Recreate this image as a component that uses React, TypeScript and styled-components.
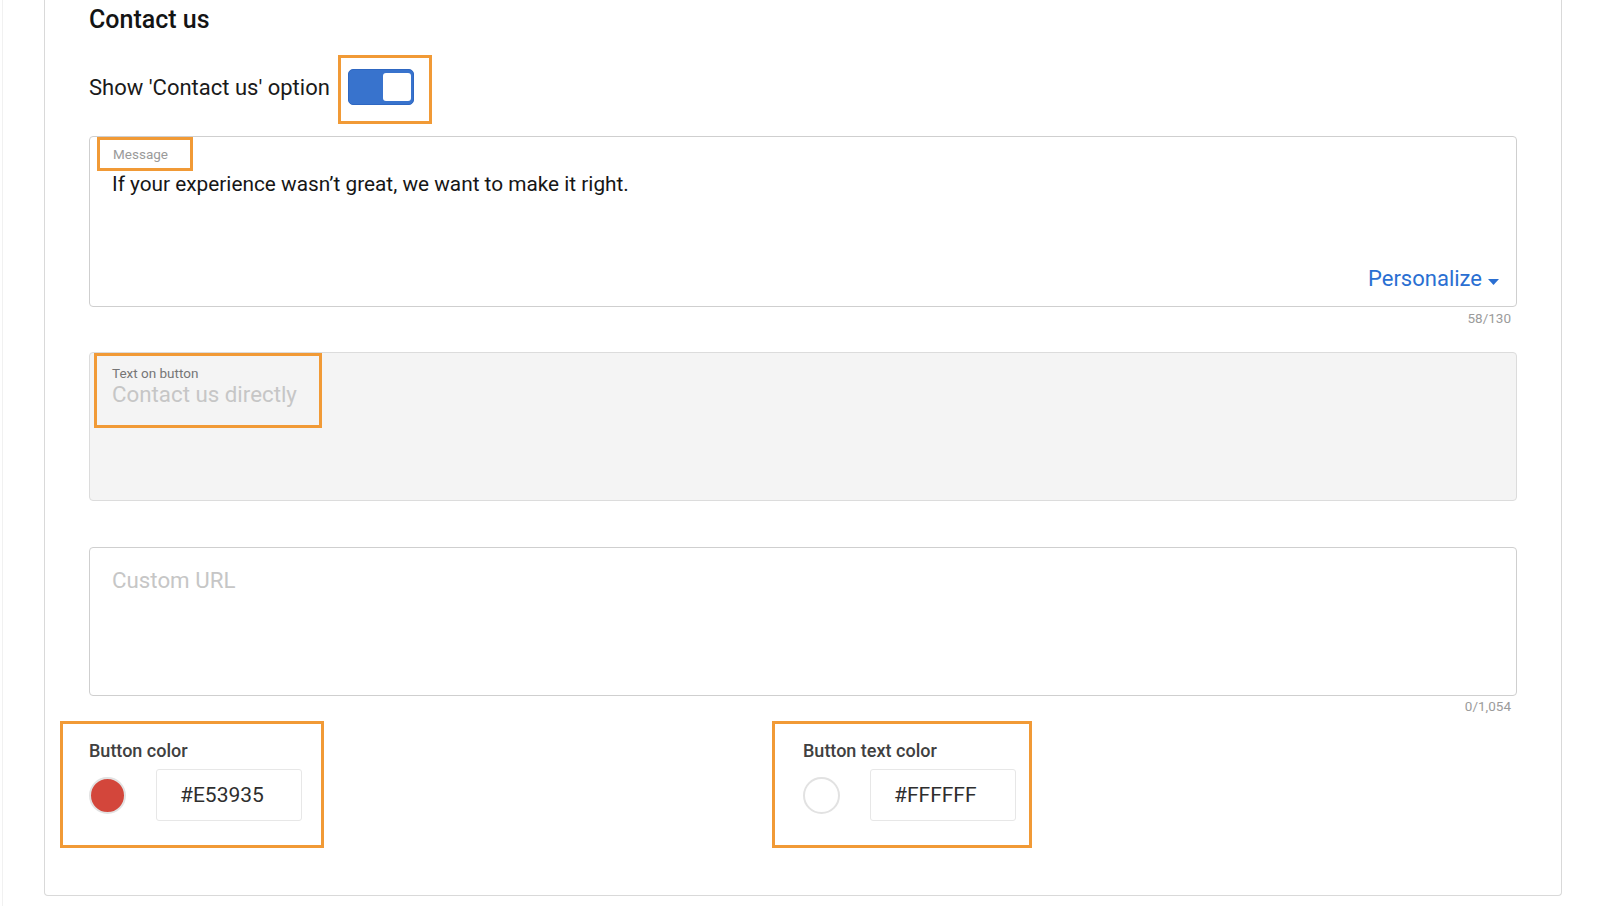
import React from "react";
import styled, { createGlobalStyle } from "styled-components";

const GlobalStyle = createGlobalStyle`
  html, body {
    margin: 0;
    padding: 0;
    background: #ffffff;
  }
  body {
    font-family: Roboto, "Noto Sans", "Liberation Sans", sans-serif;
    color: #1f1f1f;
    -webkit-font-smoothing: antialiased;
  }
  * { box-sizing: border-box; }
`;

const Page = styled.div`
  margin-left: 2px;
  border-left: 1px solid #f1f1f1;
  padding-left: 41px;
  min-height: 906px;
  display: flex;
  align-items: flex-start;
`;

const Card = styled.section`
  width: 1518px;
  border: 1px solid #d9d9d9;
  border-top: none;
  border-radius: 0 0 4px 4px;
  padding: 0 44px 47px 44px;
  display: flex;
  flex-direction: column;
`;

const Title = styled.h2`
  margin: 6px 0 0 0;
  font-size: 25px;
  line-height: 28px;
  font-weight: 500;
  color: #141414;
`;

const ToggleRow = styled.div`
  margin-top: 21px;
  display: flex;
  align-items: center;
  gap: 8px;
`;

const ToggleLabel = styled.span`
  font-size: 22px;
  line-height: 26px;
  color: #1a1a1a;
  padding-bottom: 4px;
`;

const Highlight = styled.div`
  border: 3px solid #f19a36;
`;

const ToggleHighlight = styled(Highlight)`
  padding: 11px 15px 16px 7px;
`;

const Switch = styled.div`
  width: 66px;
  height: 36px;
  border-radius: 5px;
  background: #3873cd;
  border: 1px solid #2e67c2;
  display: flex;
  justify-content: flex-end;
  align-items: center;
  padding: 0 2px;
`;

const Knob = styled.div`
  width: 28px;
  height: 28px;
  border-radius: 3px;
  background: #ffffff;
`;

const FieldBox = styled.div<{ $filled?: boolean; $height: number }>`
  height: ${(p) => p.$height}px;
  border: 1px solid ${(p) => (p.$filled ? "#dcdcdc" : "#cfcfcf")};
  background: ${(p) => (p.$filled ? "#f4f4f4" : "#ffffff")};
  border-radius: 4px;
  display: flex;
  flex-direction: column;
  align-items: flex-start;
`;

const MessageBox = styled(FieldBox)`
  margin-top: 12px;
  padding: 0 17px 14px 7px;
`;

const MessageLabelBox = styled(Highlight)`
  height: 34px;
  padding: 0 22px 0 13px;
  display: flex;
  align-items: center;
  font-size: 13.5px;
  color: #9a9a9a;
`;

const MessageText = styled.div`
  margin-left: 15px;
  font-size: 20.8px;
  line-height: 26px;
  color: #161616;
`;

const Personalize = styled.button`
  margin-top: auto;
  align-self: flex-end;
  border: none;
  background: none;
  padding: 0;
  display: flex;
  align-items: center;
  gap: 6px;
  font-family: inherit;
  font-size: 22px;
  line-height: 26px;
  color: #2a6fd2;
  cursor: pointer;
`;

const Counter = styled.div<{ $top: number }>`
  margin-top: ${(p) => p.$top}px;
  align-self: flex-end;
  padding-right: 6px;
  font-size: 13.5px;
  line-height: 16px;
  color: #9b9b9b;
`;

const ButtonTextBox = styled(FieldBox)`
  margin-top: 26px;
  padding: 0 0 0 4px;
`;

const ButtonTextHighlight = styled(Highlight)`
  padding: 9px 22px 17px 15px;
  display: flex;
  flex-direction: column;
`;

const SmallLabel = styled.span`
  font-size: 13.5px;
  line-height: 16px;
  color: #767676;
`;

const Placeholder = styled.span`
  font-size: 22.3px;
  line-height: 27px;
  color: #c6c6c6;
`;

const UrlBox = styled(FieldBox)`
  margin-top: 46px;
  padding: 19px 0 0 22px;
`;

const ColorGrid = styled.div`
  margin-top: 7px;
  display: grid;
  grid-template-columns: 1fr 1fr;
`;

const ColorHighlight = styled(Highlight)<{ $shift: number; $padLeft: number; $padRight: number }>`
  justify-self: start;
  margin-left: ${(p) => -p.$shift}px;
  padding: 16px ${(p) => p.$padRight}px 24px ${(p) => p.$padLeft}px;
  display: flex;
  flex-direction: column;
  gap: 7px;
`;

const ColorLabel = styled.span`
  font-size: 18px;
  line-height: 22px;
  font-weight: 500;
  color: #404040;
`;

const ColorRow = styled.div`
  display: flex;
  align-items: center;
  gap: 30px;
`;

const Swatch = styled.div<{ $color: string }>`
  width: 37px;
  height: 37px;
  border-radius: 50%;
  background: ${(p) => p.$color};
  border: 2px solid #e2e2e2;
`;

const HexInput = styled.div`
  width: 146px;
  height: 52px;
  border: 1px solid #e7e7e7;
  border-radius: 3px;
  display: flex;
  align-items: center;
  padding-left: 23px;
  font-size: 21px;
  color: #2e2e2e;
`;

const Caret = () => (
  <svg width="11" height="6" viewBox="0 0 11 6" style={{ marginTop: 6 }}>
    <path d="M0 0 L11 0 L5.5 6 Z" fill="#2a6fd2" />
  </svg>
);

type ColorSettingProps = {
  label: string;
  color: string;
  hex: string;
  shift: number;
  padLeft: number;
  padRight: number;
};

const ColorSetting = ({ label, color, hex, shift, padLeft, padRight }: ColorSettingProps) => (
  <ColorHighlight $shift={shift} $padLeft={padLeft} $padRight={padRight}>
    <ColorLabel>{label}</ColorLabel>
    <ColorRow>
      <Swatch $color={color} />
      <HexInput>{hex}</HexInput>
    </ColorRow>
  </ColorHighlight>
);

export default function App() {
  return (
    <>
      <GlobalStyle />
      <Page>
        <Card>
          <Title>Contact us</Title>
          <ToggleRow>
            <ToggleLabel>Show 'Contact us' option</ToggleLabel>
            <ToggleHighlight>
              <Switch>
                <Knob />
              </Switch>
            </ToggleHighlight>
          </ToggleRow>

          <MessageBox $height={171}>
            <MessageLabelBox>Message</MessageLabelBox>
            <MessageText>If your experience wasn’t great, we want to make it right.</MessageText>
            <Personalize>
              Personalize
              <Caret />
            </Personalize>
          </MessageBox>
          <Counter $top={3}>58/130</Counter>

          <ButtonTextBox $filled $height={149}>
            <ButtonTextHighlight>
              <SmallLabel>Text on button</SmallLabel>
              <Placeholder>Contact us directly</Placeholder>
            </ButtonTextHighlight>
          </ButtonTextBox>

          <UrlBox $height={149}>
            <Placeholder>Custom URL</Placeholder>
          </UrlBox>
          <Counter $top={2}>0/1,054</Counter>

          <ColorGrid>
            <ColorSetting label="Button color" color="#d3463b" hex="#E53935" shift={29} padLeft={26} padRight={19} />
            <ColorSetting label="Button text color" color="#ffffff" hex="#FFFFFF" shift={31} padLeft={28} padRight={13} />
          </ColorGrid>
        </Card>
      </Page>
    </>
  );
}
